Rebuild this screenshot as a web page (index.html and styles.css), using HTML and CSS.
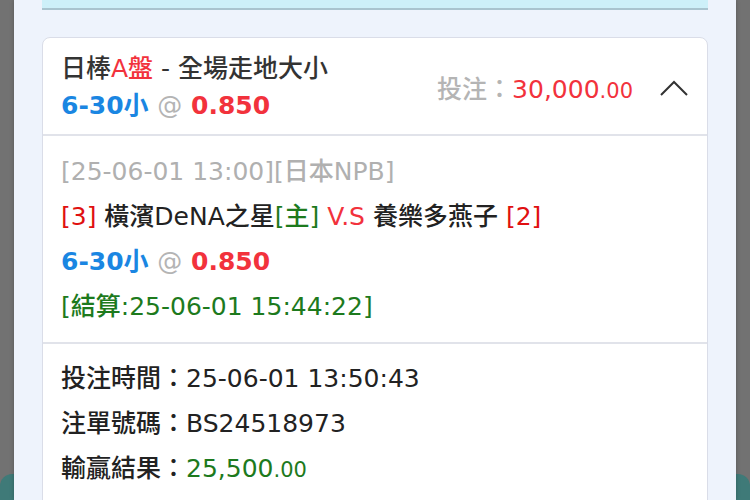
FILE: index.html
```html
<!DOCTYPE html>
<html lang="zh-Hant">
<head>
    <meta charset="UTF-8">
    <meta name="viewport" content="width=device-width, initial-scale=1.0">
    <title>注單詳情</title>
    <link rel="stylesheet" href="styles.css">
</head>
<body>
    <div class="page-behind"></div>
    <div class="panel">
        <div class="notice-box"></div>

        <div class="bet-card">
            <div class="bet-header">
                <div class="bet-title">
                    <div class="title-line">日棒<span class="red">A盤</span> - 全場走地大小</div>
                    <div class="pick-line">
                        <span class="blue">6-30小</span> <span class="at">@</span> <span class="red">0.850</span>
                    </div>
                </div>
                <div class="bet-stake">
                    <span class="stake-label">投注：</span><span class="red">30,000<small>.00</small></span>
                </div>
                <svg class="chevron" width="30" height="18" viewBox="0 0 30 18">
                    <polyline points="2,16 15,3 28,16" fill="none" stroke="#333" stroke-width="2"/>
                </svg>
            </div>

            <div class="bet-body">
                <div class="line grey">[25-06-01 13:00][日本NPB]</div>
                <div class="line">
                    <span class="red-dark">[3]</span> 橫濱DeNA之星<span class="green">[主]</span>
                    <span class="red">V.S</span> 養樂多燕子 <span class="red-dark">[2]</span>
                </div>
                <div class="line pick-line">
                    <span class="blue">6-30小</span> <span class="at">@</span> <span class="red">0.850</span>
                </div>
                <div class="line green">[結算:25-06-01 15:44:22]</div>
            </div>

            <div class="bet-info">
                <div class="line">投注時間：25-06-01 13:50:43</div>
                <div class="line">注單號碼：BS24518973</div>
                <div class="line">輸贏結果：<span class="green">25,500<small>.00</small></span></div>
            </div>
        </div>
    </div>
</body>
</html>
```

FILE: styles.css
```css
body {
    margin: 0;
    height: 500px;
    overflow: hidden;
    background-color: #727272;
    font-family: "DejaVu Sans", "Noto Sans CJK TC", sans-serif;
    color: #222;
}

.page-behind {
    position: absolute;
    left: 0;
    right: 0;
    top: 474px;
    bottom: 0;
    background-color: #3f7a78;
    border-radius: 12px 12px 0 0;
}

.panel {
    position: relative;
    margin: 0 14px;
    height: 500px;
    padding: 0 28px;
    background-color: #eef3fc;
    box-shadow: 0 0 4px rgba(0, 0, 0, 0.25);
}

.notice-box {
    height: 8px;
    background-color: #cdf0f9;
    border-bottom: 2px solid #a9c4cf;
}

.bet-card {
    margin-top: 27px;
    background-color: white;
    border: 1px solid #dadde8;
    border-radius: 8px;
    height: 480px;
}

.bet-header {
    display: flex;
    align-items: center;
    padding: 12px 18px 10px 18px;
    border-bottom: 2px solid #e1e3ea;
}

.bet-title {
    flex: 1;
}

.title-line {
    font-size: 25px;
    line-height: 37px;
    font-weight: 500;
    color: #333;
}

.bet-stake {
    font-size: 25px;
    font-weight: 500;
    margin-right: 26px;
}

.stake-label {
    color: #b4b4b4;
}

.chevron {
    margin-top: 2px;
}

small {
    font-size: 21px;
}

.bet-body {
    padding: 13px 18px;
    border-bottom: 2px solid #e1e3ea;
}

.bet-info {
    padding: 12px 18px;
}

.line {
    font-size: 25px;
    line-height: 45px;
    font-weight: 500;
    white-space: nowrap;
}

.pick-line {
    font-size: 25px;
    line-height: 37px;
    font-weight: 700;
}

.line.pick-line {
    line-height: 45px;
}

.red {
    color: #f2323c;
}

.red-dark {
    color: #e01010;
}

.blue {
    color: #1a86e2;
}

.at {
    color: #b4b4b4;
    font-weight: 400;
}

.green {
    color: #1d7a1d;
}

.grey {
    color: #b0b0b0;
}
```
